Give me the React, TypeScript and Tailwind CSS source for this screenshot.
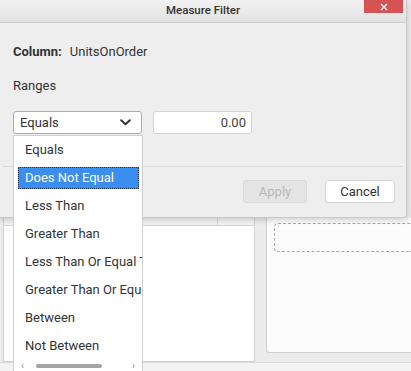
import React from 'react';

const OPTIONS = [
  'Equals',
  'Does Not Equal',
  'Less Than',
  'Greater Than',
  'Less Than Or Equal To',
  'Greater Than Or Equal To',
  'Between',
  'Not Between',
];

function Chevron() {
  return (
    <svg width="11" height="7" viewBox="0 0 11 7" className="mr-[10px]">
      <path d="M1.2 1.2 L5.5 5.3 L9.8 1.2" fill="none" stroke="#333" strokeWidth="2" strokeLinecap="round" strokeLinejoin="round" />
    </svg>
  );
}

export default function App() {
  const selected = 'Does Not Equal';

  return (
    <div className="relative w-[411px] h-[371px] overflow-hidden bg-[#ececec] font-[family-name:Roboto,sans-serif] text-[#333]">
      {/* page behind the dialog */}
      <div className="flex flex-col h-full pt-[218px]">
        <div className="flex h-[144px]">
          <div className="ml-[3px] w-[252px] flex flex-col bg-white border-x border-b border-[#d2d2d2]">
            <div className="h-[8px] bg-[#f3f3f3] border-b border-[#d6d6d6] flex">
              <div className="w-[214px] border-r border-[#d6d6d6]" />
            </div>
            <div className="flex-1" />
          </div>
          <div className="w-[11px]" />
          <div className="flex-1 h-[135px] bg-[#fbfbfb] border-l border-b border-[#cfcfcf] rounded-bl-[3px] pl-[7px] pt-[5px]">
            <div className="h-[29px] border border-r-0 border-dashed border-[#a9a9a9] rounded-l-[4px]" />
          </div>
        </div>
        <div className="flex-1 bg-[#f3f3f3] border-t border-[#dadada]" />
      </div>

      {/* dialog */}
      <div className="absolute left-0 top-0 w-[407px] h-[218px] flex flex-col bg-[#eeeeee] border-r border-b border-[#c9c9c9] rounded-br-[3px] shadow-[0_2px_6px_rgba(0,0,0,0.18)]">
        <div className="relative h-[23px] flex items-center justify-center bg-gradient-to-b from-[#f2f2f2] to-[#e2e2e2] border-b border-[#cdcdcd]">
          <span className="text-[11.5px] font-medium text-[#333]">Measure Filter</span>
          <button className="absolute right-[3px] top-0 w-[39px] h-[13px] flex items-center justify-center bg-[#d65353]">
            <svg width="8" height="8" viewBox="0 0 8 8">
              <path d="M1 1 L7 7 M7 1 L1 7" stroke="#fff" strokeWidth="1.4" />
            </svg>
          </button>
        </div>

        <div className="flex flex-col px-[13px] pt-[21px]">
          <div className="flex items-center h-[16px] text-[13px]">
            <span className="font-bold">Column:</span>
            <span className="ml-[8px]">UnitsOnOrder</span>
          </div>
          <div className="mt-[18px] h-[16px] flex items-center text-[13px]">Ranges</div>
          <div className="mt-[17px] flex gap-[11px]">
            <div className="w-[129px] h-[23px] flex items-center justify-between bg-white border border-[#86b4ea] rounded-[3px] pl-[6px] text-[13px]">
              <span>Equals</span>
              <Chevron />
            </div>
            <div className="w-[99px] h-[23px] flex items-center justify-end bg-white border border-[#d3d3d3] rounded-[3px] pr-[5px] text-[13px] text-[#444]">
              0.00
            </div>
          </div>
        </div>

        <div className="mt-[32px] mx-[3px] h-px bg-[#dadada]" />

        <div className="mt-[13px] flex justify-end gap-[18px] pr-[11px]">
          <button className="w-[64px] h-[23px] bg-[#e4e4e4] border border-[#dadada] rounded-[3px] text-[13px] text-[#b8b8b8]">
            Apply
          </button>
          <button className="w-[70px] h-[23px] bg-white border border-[#d3d3d3] rounded-[3px] text-[13px] text-[#333]">
            Cancel
          </button>
        </div>
      </div>

      {/* open dropdown list */}
      <div className="absolute left-[13px] top-[135px] w-[130px] h-[236px] flex flex-col bg-white border border-b-0 border-[#cfcfcf] overflow-hidden">
        {OPTIONS.map((opt) => (
          <div key={opt} className="h-[28px] shrink-0 flex items-center">
            {opt === selected ? (
              <div className="ml-[4px] w-[121px] h-[22px] flex items-center pl-[6px] bg-[#3b8ef0] border border-dotted border-[#1c3557] text-[13px] text-white whitespace-nowrap">
                {opt}
              </div>
            ) : (
              <div className="pl-[11px] text-[13px] text-[#333] whitespace-nowrap">{opt}</div>
            )}
          </div>
        ))}
        <div className="flex-1 flex items-center pl-[7px] pr-[7px] bg-white">
          <span className="text-[10px] text-[#888] leading-none">‹</span>
          <div className="ml-[12px] w-[66px] h-[4px] rounded-full bg-[#a5a5a5]" />
          <div className="flex-1" />
          <span className="text-[10px] text-[#888] leading-none">›</span>
        </div>
      </div>
    </div>
  );
}
